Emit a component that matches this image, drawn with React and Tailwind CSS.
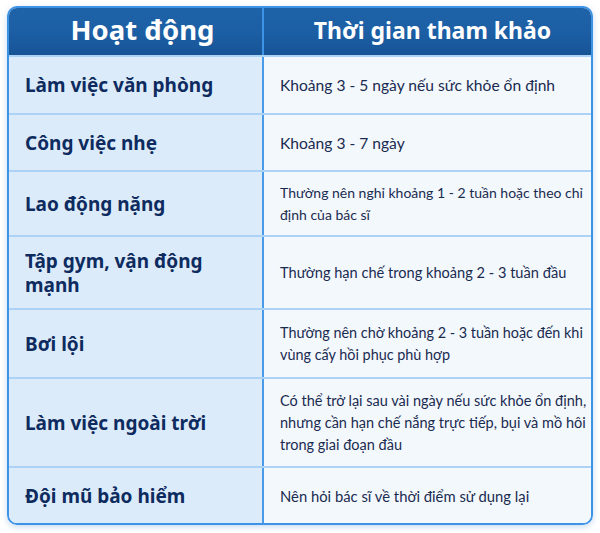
import React from "react";

// Table rows: activity, suggested time (lines as in the layout), row styles
const rows = [
  {
    activity: ["Làm việc văn phòng"],
    time: ["Khoảng 3 - 5 ngày nếu sức khỏe ổn định"],
    height: "h-[58px]",
    size: "text-[15.6px]",
  },
  {
    activity: ["Công việc nhẹ"],
    time: ["Khoảng 3 - 7 ngày"],
    height: "h-[57px]",
    size: "text-[15.6px]",
  },
  {
    activity: ["Lao động nặng"],
    time: ["Thường nên nghỉ khoảng 1 - 2 tuần hoặc theo chỉ", "định của bác sĩ"],
    height: "h-[65px]",
    size: "text-[14px]",
  },
  {
    activity: ["Tập gym, vận động", "mạnh"],
    time: ["Thường hạn chế trong khoảng 2 - 3 tuần đầu"],
    height: "h-[73px]",
    size: "text-[14.6px]",
  },
  {
    activity: ["Bơi lội"],
    time: ["Thường nên chờ khoảng 2 - 3 tuần hoặc đến khi", "vùng cấy hồi phục phù hợp"],
    height: "h-[69px]",
    size: "text-[14.4px]",
  },
  {
    activity: ["Làm việc ngoài trời"],
    time: [
      "Có thể trở lại sau vài ngày nếu sức khỏe ổn định,",
      "nhưng cần hạn chế nắng trực tiếp, bụi và mồ hôi",
      "trong giai đoạn đầu",
    ],
    height: "h-[89px]",
    size: "text-[14.5px]",
  },
  {
    activity: ["Đội mũ bảo hiểm"],
    time: ["Nên hỏi bác sĩ về thời điểm sử dụng lại"],
    height: "h-[57px]",
    size: "text-[14.8px]",
  },
];

function App() {
  return (
    <div className="w-[600px] h-[533px] bg-white pt-[6px] pl-[7px] font-['Noto_Sans',sans-serif]">
      <div className="w-[586px] rounded-[10px] border-2 border-[#3d93e6] overflow-hidden shadow-[0_2px_6px_rgba(40,110,200,0.25)]">
        {/* Header */}
        <div className="grid grid-cols-[255px_1fr] h-[47px] bg-gradient-to-b from-[#1e62a7] via-[#1c5fa5] to-[#175496] text-white">
          <div className="flex items-center justify-center pl-[14px] border-r-2 border-[#3d93e6] text-[27.5px] font-bold pb-[3px]">
            Hoạt động
          </div>
          <div className="flex items-center justify-center pl-[10px] text-[23px] font-bold pb-[3px]">
            Thời gian tham khảo
          </div>
        </div>

        {/* Body */}
        {rows.map((row, i) => (
          <div
            key={i}
            className={`grid grid-cols-[255px_1fr] ${row.height} border-t-2 border-[#acd2f5]`}
          >
            <div className="flex flex-col justify-center pl-[16px] bg-[#dcebfa] border-r-2 border-[#4a9ae8] text-[19px] leading-[24px] font-bold text-[#0e2b60]">
              {row.activity.map((line) => (
                <span key={line} className="whitespace-nowrap">
                  {line}
                </span>
              ))}
            </div>
            <div
              className={`flex flex-col justify-center pl-[16px] bg-[#f3f8fd] ${row.size} leading-[22px] text-[#1a2b50] font-['Lato',sans-serif]`}
            >
              {row.time.map((line) => (
                <span key={line} className="whitespace-nowrap">
                  {line}
                </span>
              ))}
            </div>
          </div>
        ))}
      </div>
    </div>
  );
}

export default App;
